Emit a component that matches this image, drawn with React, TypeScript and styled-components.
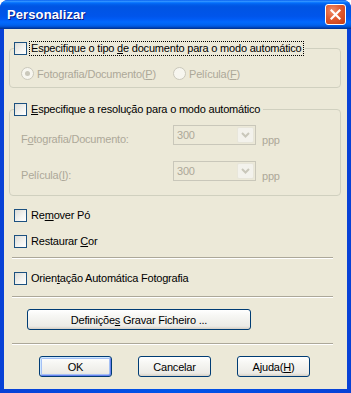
import React from 'react';
import styled, { createGlobalStyle, css } from 'styled-components';

const GlobalStyle = createGlobalStyle`
  html, body {
    margin: 0;
    padding: 0;
    background: #ffffff;
  }
  body {
    font-family: "Liberation Sans", Arial, sans-serif;
    font-size: 11px;
    letter-spacing: -0.2px;
    color: #000000;
  }
`;

const Window = styled.div`
  width: 351px;
  height: 393px;
  display: flex;
  flex-direction: column;
  box-sizing: border-box;
  border-radius: 8px 8px 0 0;
  overflow: hidden;
  background: #0831d9;
`;

const TitleBar = styled.div`
  height: 29px;
  flex: none;
  display: flex;
  align-items: center;
  justify-content: space-between;
  padding: 0 5px 0 7px;
  box-sizing: border-box;
  background: linear-gradient(
    to bottom,
    #0058ee 0%,
    #3593ff 4%,
    #288eff 6%,
    #127dff 8%,
    #036ffc 10%,
    #0262ee 14%,
    #0057e5 20%,
    #0054e3 24%,
    #0055eb 56%,
    #005bf5 66%,
    #026afe 76%,
    #0062ef 86%,
    #0052d6 92%,
    #0040ab 96%,
    #003092 100%
  );
`;

const Title = styled.span`
  font-family: "Liberation Sans", Arial, sans-serif;
  font-weight: bold;
  font-size: 13px;
  color: #ffffff;
  text-shadow: 1px 1px 0 #0a1883;
  letter-spacing: 0.1px;
`;

const CloseButton = styled.div`
  width: 21px;
  height: 21px;
  box-sizing: border-box;
  border: 1px solid #ffffff;
  border-radius: 3px;
  background: radial-gradient(circle at 35% 30%, #f08e6c 0%, #e05a30 45%, #c63b12 100%);
  display: flex;
  align-items: center;
  justify-content: center;
`;

const Frame = styled.div`
  flex: 1;
  display: flex;
  padding: 0 4px 4px 4px;
  background: linear-gradient(to right, #0841d6 0%, #0055ea 50%, #0841d6 100%);
`;

const Client = styled.div`
  flex: 1;
  background: #ece9d8;
  display: flex;
  flex-direction: column;
`;

const Group = styled.fieldset<{ $top: number; $height: number }>`
  margin: ${p => p.$top}px 0 0 5px;
  width: 332px;
  height: ${p => p.$height}px;
  box-sizing: border-box;
  border: 1px solid #d0d0bf;
  border-radius: 4px;
  padding: 0;
  min-width: 0;
`;

const Legend = styled.legend`
  margin-left: 4px;
  padding: 0 1px 0 0;
  height: 15px;
  display: flex;
  align-items: center;
`;

const Box = styled.span`
  width: 13px;
  height: 13px;
  box-sizing: border-box;
  flex: none;
  border: 1px solid #1c5180;
  background: linear-gradient(135deg, #dcdcd7 0%, #f4f4f1 60%, #ffffff 100%);
`;

const CheckRow = styled.div<{ $top: number }>`
  display: flex;
  align-items: center;
  height: 13px;
  margin: ${p => p.$top}px 0 0 10px;
`;

const Label = styled.span<{ $focus?: boolean }>`
  line-height: 13px;
  white-space: nowrap;
  padding: 0 1px;
  margin-left: 2px;
  border: 1px ${p => (p.$focus ? 'dotted #000000' : 'solid transparent')};
`;

const U = styled.span`
  text-decoration: underline;
`;

const RadioRow = styled.div`
  display: flex;
  align-items: center;
  margin: 11px 0 0 11px;
  height: 13px;
`;

const RadioItem = styled.div<{ $width?: number }>`
  display: flex;
  align-items: center;
  width: ${p => (p.$width ? `${p.$width}px` : 'auto')};
  color: #aca899;
`;

const Radio = styled.span<{ $checked?: boolean }>`
  width: 13px;
  height: 13px;
  box-sizing: border-box;
  border-radius: 50%;
  border: 1px solid #cac8bb;
  background: #f7f6ef;
  display: flex;
  align-items: center;
  justify-content: center;
  margin-right: 3px;
  &::after {
    content: '';
    display: ${p => (p.$checked ? 'block' : 'none')};
    width: 5px;
    height: 5px;
    border-radius: 50%;
    background: #cac8bb;
  }
`;

const FieldRow = styled.div<{ $top: number }>`
  display: flex;
  align-items: flex-start;
  margin: ${p => p.$top}px 0 0 0;
  height: 20px;
`;

const FieldLabel = styled.span`
  width: 152px;
  padding: 8px 0 0 11px;
  line-height: 13px;
  color: #aca899;
`;

const Combo = styled.div`
  width: 83px;
  height: 20px;
  box-sizing: border-box;
  border: 1px solid #c9c7ba;
  background: #ece9d8;
  display: flex;
  align-items: center;
  justify-content: space-between;
  padding: 1px;
  color: #aca899;
`;

const ComboText = styled.span`
  padding-left: 2px;
`;

const ComboArrow = styled.span`
  width: 17px;
  height: 16px;
  box-sizing: border-box;
  border: 1px solid #e8e6da;
  border-radius: 2px;
  background: #f3f2ec;
  display: flex;
  align-items: center;
  justify-content: center;
`;

const Unit = styled.span`
  margin: 9px 0 0 6px;
  line-height: 13px;
  color: #aca899;
`;

const Separator = styled.div<{ $top: number }>`
  margin: ${p => p.$top}px 0 0 8px;
  width: 321px;
  height: 0;
  border-top: 1px solid #aca899;
  border-bottom: 1px solid #ffffff;
`;

const Button = styled.div<{ $width?: number; $default?: boolean }>`
  width: ${p => p.$width ?? 73}px;
  height: 21px;
  box-sizing: border-box;
  border: 1px solid #003c74;
  border-radius: 3px;
  display: flex;
  align-items: center;
  justify-content: center;
  background: linear-gradient(to bottom, #ffffff 0%, #f7f7f4 30%, #ecebe6 85%, #d6d0c5 100%);
  white-space: nowrap;
  ${p =>
    p.$default &&
    css`
      box-shadow: inset 1px 1px 0 #cee7ff, inset -1px -1px 0 #6982ee, inset 0 0 0 2px #a4c0f5;
    `}
`;

const SingleButtonRow = styled.div`
  display: flex;
  margin: 11px 0 0 23px;
`;

const ButtonRow = styled.div`
  display: flex;
  gap: 26px;
  margin: 11px 0 0 35px;
`;

const Chevron = () => (
  <svg width="9" height="6" viewBox="0 0 9 6">
    <path d="M1 1 L4.5 4.5 L8 1" fill="none" stroke="#c9c7ba" strokeWidth="2" />
  </svg>
);

const CloseIcon = () => (
  <svg width="11" height="11" viewBox="0 0 11 11">
    <path d="M1.5 1.5 L9.5 9.5 M9.5 1.5 L1.5 9.5" stroke="#ffffff" strokeWidth="2.2" strokeLinecap="square" />
  </svg>
);

const App = () => {
  return (
    <>
      <GlobalStyle />
      <Window>
        <TitleBar>
          <Title>Personalizar</Title>
          <CloseButton>
            <CloseIcon />
          </CloseButton>
        </TitleBar>
        <Frame>
          <Client>
            <Group $top={12} $height={47}>
              <Legend>
                <Box />
                <Label $focus>
                  Especifique o tipo <U>d</U>e documento para o modo automático
                </Label>
              </Legend>
              <RadioRow>
                <RadioItem $width={152}>
                  <Radio $checked />
                  Fotografia/Documento(<U>P</U>)
                </RadioItem>
                <RadioItem>
                  <Radio />
                  Película(<U>F</U>)
                </RadioItem>
              </RadioRow>
            </Group>

            <Group $top={14} $height={94}>
              <Legend>
                <Box />
                <Label>
                  <U>E</U>specifique a resolução para o modo automático
                </Label>
              </Legend>
              <FieldRow $top={8}>
                <FieldLabel>
                  F<U>o</U>tografia/Documento:
                </FieldLabel>
                <Combo>
                  <ComboText>300</ComboText>
                  <ComboArrow>
                    <Chevron />
                  </ComboArrow>
                </Combo>
                <Unit>ppp</Unit>
              </FieldRow>
              <FieldRow $top={16}>
                <FieldLabel>
                  Película(<U>I</U>):
                </FieldLabel>
                <Combo>
                  <ComboText>300</ComboText>
                  <ComboArrow>
                    <Chevron />
                  </ComboArrow>
                </Combo>
                <Unit>ppp</Unit>
              </FieldRow>
            </Group>

            <CheckRow $top={13}>
              <Box />
              <Label>
                Re<U>m</U>over Pó
              </Label>
            </CheckRow>
            <CheckRow $top={13}>
              <Box />
              <Label>
                Restaurar <U>C</U>or
              </Label>
            </CheckRow>

            <Separator $top={9} />

            <CheckRow $top={13}>
              <Box />
              <Label>
                Orien<U>t</U>ação Automática Fotografia
              </Label>
            </CheckRow>

            <Separator $top={11} />

            <SingleButtonRow>
              <Button $width={224}>
                Definiçõe<U>s</U>&nbsp;Gravar Ficheiro ...
              </Button>
            </SingleButtonRow>

            <Separator $top={13} />

            <ButtonRow>
              <Button $default>OK</Button>
              <Button>Cancelar</Button>
              <Button>
                Ajuda(<U>H</U>)
              </Button>
            </ButtonRow>
          </Client>
        </Frame>
      </Window>
    </>
  );
};

export default App;
